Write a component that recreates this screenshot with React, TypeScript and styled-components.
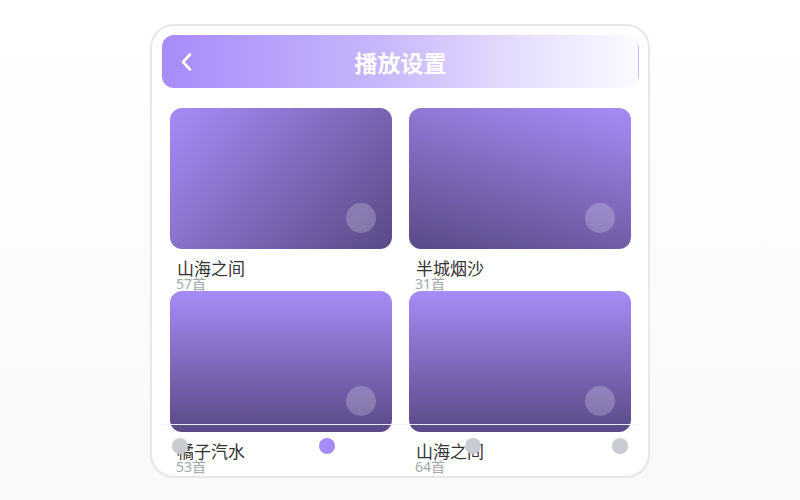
import React from "react";
import styled, { createGlobalStyle } from "styled-components";

const Global = createGlobalStyle`
  html, body { margin: 0; padding: 0; }
  body {
    width: 800px; height: 500px; overflow: hidden;
    background: linear-gradient(180deg, #ffffff 0%, #fcfcfc 50%, #f9f9fa 100%);
    font-family: "Noto Sans", "Noto Sans CJK SC", sans-serif;
  }
`;

const Stage = styled.div`
  width: 800px;
  height: 500px;
  display: flex;
  justify-content: center;
  padding-top: 24px;
  box-sizing: border-box;
`;

const Phone = styled.div`
  position: relative;
  width: 500px;
  height: 454px;
  box-sizing: border-box;
  border: 2px solid #e7e7eb;
  border-radius: 24px;
  background: #ffffff;
  overflow: hidden;
  padding: 9px 10px 0 10px;
  display: flex;
  flex-direction: column;
`;

const Header = styled.div`
  position: relative;
  height: 53px;
  width: 477px;
  border-radius: 12px;
  background: linear-gradient(90deg, #a78bfa 0%, #c6b6fb 45%, #eae4fd 80%, #fbfaff 100%);
  display: flex;
  align-items: center;
  justify-content: center;
  flex-shrink: 0;
  &::after {
    content: "";
    position: absolute;
    right: 0;
    top: 10px;
    bottom: 10px;
    width: 1px;
    background: #c9bdf7;
  }
`;

const Back = styled.div`
  position: absolute;
  left: 13px;
  top: 15px;
  width: 24px;
  height: 24px;
  display: flex;
`;

const Title = styled.h1`
  margin: 0;
  color: #ffffff;
  font-size: 23px;
  line-height: 30px;
  font-weight: 700;
  font-family: "Noto Sans CJK SC", sans-serif;
`;

const Grid = styled.div`
  display: grid;
  grid-template-columns: 222px 222px;
  column-gap: 17px;
  row-gap: 0;
  padding: 20px 0 0 8px;
`;

const Card = styled.div`
  display: flex;
  flex-direction: column;
`;

const Cover = styled.div<{ $angle: number }>`
  position: relative;
  height: 141px;
  border-radius: 12px;
  background: linear-gradient(${(p) => p.$angle}deg, #a78bf6 0%, #5a4a86 100%);
`;

const PlayDot = styled.div`
  position: absolute;
  right: 16px;
  bottom: 16px;
  width: 30px;
  height: 30px;
  border-radius: 50%;
  background: rgba(255, 255, 255, 0.22);
`;

const Name = styled.div`
  margin-top: 10px;
  padding-left: 7px;
  font-size: 17px;
  line-height: 18px;
  color: #333333;
  font-family: "Noto Sans CJK SC", sans-serif;
  font-weight: 400;
`;

const Count = styled.div`
  padding-left: 6px;
  font-size: 14px;
  line-height: 14px;
  color: #a3a7ae;
  font-family: "Noto Sans", "Noto Sans CJK SC", sans-serif;
`;

const TabBar = styled.div`
  position: absolute;
  left: 10px;
  right: 10px;
  top: 398px;
  height: 40px;
  border-top: 1px solid rgba(240, 240, 244, 0.95);
  display: flex;
  justify-content: space-between;
  align-items: flex-start;
  padding: 13px 10px 0 10px;
  box-sizing: border-box;
`;

const Dot = styled.div<{ $active?: boolean }>`
  width: 16px;
  height: 16px;
  border-radius: 50%;
  background: ${(p) => (p.$active ? "#a78bfa" : "#c9ccd2")};
`;

const items = [
  { name: "山海之间", count: "57首", angle: 135 },
  { name: "半城烟沙", count: "31首", angle: 195 },
  { name: "橘子汽水", count: "53首", angle: 180 },
  { name: "山海之间", count: "64首", angle: 180 },
];

export default function App() {
  return (
    <>
      <Global />
      <Stage>
        <Phone>
          <Header>
            <Back>
              <svg width="24" height="24" viewBox="0 0 24 24" fill="none">
                <path d="M15 4.5 L8 12 L15 19.5" stroke="#fff" strokeWidth="2.6" strokeLinecap="round" strokeLinejoin="round" />
              </svg>
            </Back>
            <Title>播放设置</Title>
          </Header>
          <Grid>
            {items.map((it, i) => (
              <Card key={i}>
                <Cover $angle={it.angle}>
                  <PlayDot />
                </Cover>
                <Name>{it.name}</Name>
                <Count>{it.count}</Count>
              </Card>
            ))}
          </Grid>
          <TabBar>
            <Dot />
            <Dot $active />
            <Dot />
            <Dot />
          </TabBar>
        </Phone>
      </Stage>
    </>
  );
}
